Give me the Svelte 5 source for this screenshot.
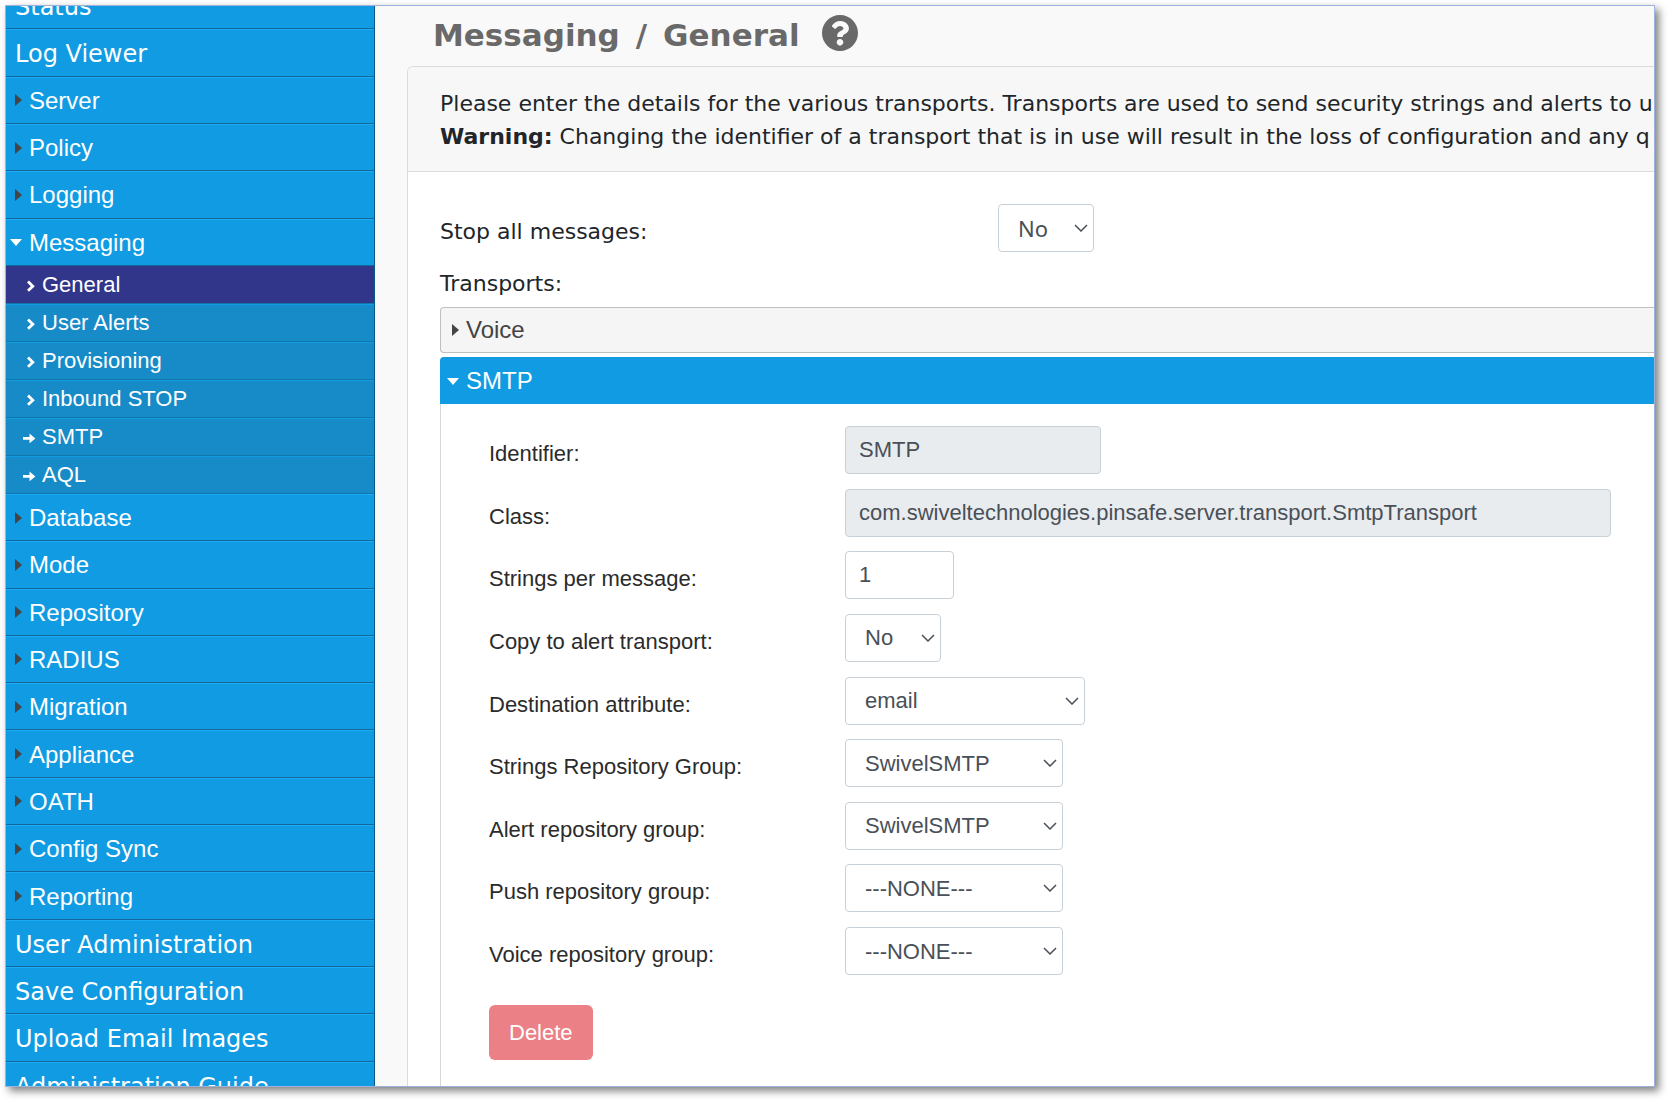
<script>
  const menu = [
    { label: 'Status' },
    { label: 'Log Viewer' },
    { label: 'Server', group: true },
    { label: 'Policy', group: true },
    { label: 'Logging', group: true },
    {
      label: 'Messaging',
      group: true,
      children: [
        { label: 'General', icon: 'angle' },
        { label: 'User Alerts', icon: 'angle' },
        { label: 'Provisioning', icon: 'angle' },
        { label: 'Inbound STOP', icon: 'angle' },
        { label: 'SMTP', icon: 'arrow' },
        { label: 'AQL', icon: 'arrow' },
      ],
    },
    { label: 'Database', group: true },
    { label: 'Mode', group: true },
    { label: 'Repository', group: true },
    { label: 'RADIUS', group: true },
    { label: 'Migration', group: true },
    { label: 'Appliance', group: true },
    { label: 'OATH', group: true },
    { label: 'Config Sync', group: true },
    { label: 'Reporting', group: true },
    { label: 'User Administration' },
    { label: 'Save Configuration' },
    { label: 'Upload Email Images' },
    { label: 'Administration Guide' },
  ];

  const fields = [
    { id: 'identifier', label: 'Identifier:', type: 'text', value: 'SMTP', size: 'name', disabled: true },
    {
      id: 'class',
      label: 'Class:',
      type: 'text',
      value: 'com.swiveltechnologies.pinsafe.server.transport.SmtpTransport',
      size: 'class',
      disabled: true,
    },
    { id: 'strings', label: 'Strings per message:', type: 'text', value: '1', size: 'count' },
    { id: 'copy', label: 'Copy to alert transport:', type: 'select', options: ['No', 'Yes'], size: 'yesno' },
    { id: 'destination', label: 'Destination attribute:', type: 'select', options: ['email'], size: 'attribute' },
    { id: 'strings-group', label: 'Strings Repository Group:', type: 'select', options: ['SwivelSMTP', '---NONE---'], size: 'group' },
    { id: 'alert-group', label: 'Alert repository group:', type: 'select', options: ['SwivelSMTP', '---NONE---'], size: 'group' },
    { id: 'push-group', label: 'Push repository group:', type: 'select', options: ['---NONE---', 'SwivelSMTP'], size: 'group' },
    { id: 'voice-group', label: 'Voice repository group:', type: 'select', options: ['---NONE---', 'SwivelSMTP'], size: 'group' },
  ];

  let current = $state('General');
  let smtpOpen = $state(true);
</script>

{#snippet caret(open)}
  <svg class="caret" viewBox="0 0 14 14" aria-hidden="true">
    {#if open}
      <path d="M1 4h12l-6 7z" fill="#fff" />
    {:else}
      <path d="M6 1v12l7-6z" fill="#444" />
    {/if}
  </svg>
{/snippet}

<div class="page">
  <div class="frame">
    <nav class="sidebar">
      <ul class="menu">
        {#each menu as item}
          <li>
            <a class="menu-link" class:group={item.group} href="#{item.label}">
              {#if item.group}
                {@render caret(!!item.children)}
              {/if}
              {item.label}
            </a>
            {#if item.children}
              <ul class="submenu">
                {#each item.children as child}
                  <li>
                    <a
                      class="submenu-link"
                      class:active={current === child.label}
                      href="#{child.label}"
                      onclick={() => (current = child.label)}
                    >
                      <svg class="sub-icon" viewBox="0 0 14 14" aria-hidden="true">
                        {#if child.icon === 'angle'}
                          <path d="M5 2.6l4.8 4.6L5 11.8" fill="none" stroke="#fff" stroke-width="2.8" />
                        {:else}
                          <path d="M0 6h6.5V2.6L12.4 7.4 6.5 12.2V8.8H0z" fill="#fff" />
                        {/if}
                      </svg>
                      {child.label}
                    </a>
                  </li>
                {/each}
              </ul>
            {/if}
          </li>
        {/each}
      </ul>
    </nav>

    <main>
      <h1>
        <span>Messaging</span>
        <span>/</span>
        <span>General</span>
        <a class="help" href="#help" aria-label="Help">
          <svg viewBox="8 8 496 496" aria-hidden="true">
            <path
              fill="currentColor"
              d="M504 256c0 136.997-111.043 248-248 248S8 392.997 8 256C8 119.083 119.043 8 256 8s248 111.083 248 248zM262.655 90c-54.497 0-89.255 22.957-116.549 63.758-3.536 5.286-2.353 12.415 2.715 16.258l34.699 26.31c5.205 3.947 12.621 3.008 16.665-2.122 17.864-22.658 30.113-35.797 57.303-35.797 20.429 0 45.698 13.148 45.698 32.958 0 14.976-12.363 22.667-32.534 33.976C247.128 238.528 216 254.941 216 296v4c0 6.627 5.373 12 12 12h56c6.627 0 12-5.373 12-12v-1.333c0-28.462 83.186-29.647 83.186-106.667 0-58.002-60.165-102-116.531-102zM256 338c-25.365 0-46 20.635-46 46 0 25.364 20.635 46 46 46s46-20.636 46-46c0-25.365-20.635-46-46-46z"
            />
          </svg>
        </a>
      </h1>

      <section class="card">
        <header class="intro">
          <p>Please enter the details for the various transports. Transports are used to send security strings and alerts to u</p>
          <p><strong>Warning:</strong> Changing the identifier of a transport that is in use will result in the loss of configuration and any q</p>
        </header>

        <div class="card-body">
          <div class="stop-row">
            <label for="stop-all">Stop all messages:</label>
            <select id="stop-all" class="yesno">
              <option>No</option>
              <option>Yes</option>
            </select>
          </div>

          <h2>Transports:</h2>

          <button type="button" class="accordion">
            {@render caret(false)}
            Voice
          </button>
          <button type="button" class="accordion" class:open={smtpOpen} onclick={() => (smtpOpen = !smtpOpen)}>
            {@render caret(smtpOpen)}
            SMTP
          </button>

          {#if smtpOpen}
            <form class="transport">
              <div class="fields">
                {#each fields as field}
                  <div class="field">
                    <label for={field.id}>{field.label}</label>
                    {#if field.type === 'select'}
                      <select id={field.id} class={field.size}>
                        {#each field.options as option}
                          <option>{option}</option>
                        {/each}
                      </select>
                    {:else}
                      <input type="text" id={field.id} class={field.size} value={field.value} disabled={field.disabled} />
                    {/if}
                  </div>
                {/each}
              </div>
              <button type="button" class="delete">Delete</button>
            </form>
          {/if}
        </div>
      </section>
    </main>
  </div>
</div>

<style>
  :global(body) {
    margin: 0;
    background: #fff;
  }

  .page,
  .page :global(*) {
    box-sizing: border-box;
  }

  .page {
    display: grid;
    grid-template-rows: minmax(0, 1fr);
    height: 100vh;
    padding: 5px 13px 13px 5px;
    overflow: hidden;
  }

  .frame {
    display: grid;
    grid-template-rows: minmax(0, 1fr);
    grid-template-columns: 369px minmax(0, 1fr);
    border: 1px solid #9db2dc;
    background: #f9f9f9;
    box-shadow: 4px 4px 8px rgba(0, 0, 0, 0.5);
    overflow: hidden;
    color: #212529;
    font-family: 'Liberation Sans', Arial, sans-serif;
    font-size: 22px;
    line-height: 33px;
  }

  /* sidebar */
  .sidebar {
    display: flex;
    flex-direction: column;
    min-height: 0;
    overflow: hidden;
    border-right: 1px solid #07598a;
    background: #109be2;
  }

  ul {
    margin: 0;
    padding: 0;
    list-style: none;
  }

  /* scrolled a little, so the first and last entries are cut */
  .menu {
    display: flex;
    flex: 1;
    flex-direction: column;
    margin: -24px 0 -23px;
  }

  .menu > li {
    display: flex;
    flex: 1 0 auto;
    flex-direction: column;
  }

  .menu-link {
    display: flex;
    flex: 1 0 auto;
    align-items: center;
    min-height: 47px;
    padding: 4px 9px 0;
    border-top: 1px solid #1cabf6;
    border-bottom: 1px solid #136899;
    color: #fff;
    font-family: 'DejaVu Sans', Verdana, sans-serif;
    font-size: 24px;
    text-decoration: none;
  }

  .menu-link.group {
    padding: 0 3px;
    font-family: 'Liberation Sans', Arial, sans-serif;
  }

  .caret {
    flex: none;
    width: 14px;
    height: 14px;
    margin-right: 6px;
  }

  .submenu-link {
    display: flex;
    align-items: center;
    height: 38px;
    padding: 0 17px;
    border-top: 1px solid #109be2;
    border-bottom: 1px solid #1176ac;
    background: #178bc7;
    color: #fff;
    text-decoration: none;
  }

  .submenu-link.active {
    border-top-color: #32368a;
    background: #32368a;
  }

  .sub-icon {
    flex: none;
    width: 14px;
    height: 14px;
    margin: 2px 5px 0 0;
  }

  /* content */
  main {
    min-width: 0;
    padding-left: 32px;
    overflow: hidden;
    font-family: 'DejaVu Sans', Verdana, sans-serif;
  }

  h1 {
    display: flex;
    align-items: center;
    gap: 16px;
    height: 60px;
    margin: 0;
    padding: 0 0 2px 26px;
    color: #696969;
    font-size: 31px;
    white-space: nowrap;
  }

  .help {
    display: flex;
    margin: 0 0 4px 6px;
    color: inherit;
  }

  .help svg {
    width: 36px;
    height: 36px;
  }

  .card {
    min-height: 100%;
    border: 1px solid #dcdcdc;
    border-right: 0;
    border-radius: 6px 0 0 0;
    background: #fff;
    overflow: hidden;
  }

  .intro {
    padding: 20px 0 18px 32px;
    border-bottom: 1px solid #dcdcdc;
    background: #f7f7f7;
    white-space: nowrap;
  }

  p {
    margin: 0;
  }

  .card-body {
    padding: 32px 0 0 32px;
  }

  .stop-row {
    display: grid;
    grid-template-columns: 558px auto;
    justify-items: start;
  }

  label {
    padding-top: 11px;
  }

  h2 {
    margin: 15px 0 7px;
    font-size: 22px;
    font-weight: normal;
  }

  .accordion {
    display: flex;
    align-items: center;
    width: 100%;
    height: 46px;
    margin-bottom: 4px;
    padding: 0 5px;
    border: 1px solid #bfbfbf;
    border-right: 0;
    border-radius: 4px 0 0 4px;
    background: #f5f5f5;
    color: #444;
    font-family: 'Liberation Sans', Arial, sans-serif;
    font-size: 24px;
  }

  .accordion.open {
    height: 47px;
    margin-bottom: 0;
    border-color: #109be2;
    border-radius: 4px 0 0 0;
    background: #109be2;
    color: #fff;
  }

  .transport {
    padding: 22px 0 40px 48px;
    border-left: 1px solid #d8d8d8;
    color: #2b2b2b;
    font-family: 'Liberation Sans', Arial, sans-serif;
  }

  .fields {
    display: flex;
    flex-direction: column;
    justify-content: space-between;
    min-height: 549px;
  }

  .field {
    display: grid;
    grid-template-columns: 356px auto;
    justify-items: start;
    height: 48px;
  }

  input,
  select {
    height: 48px;
    border: 1px solid #c8d0d7;
    border-radius: 4px;
    background: #fff;
    color: #495057;
    font-family: 'Liberation Sans', Arial, sans-serif;
    font-size: 22px;
  }

  input {
    padding: 0 13px;
  }

  input:disabled {
    background: #e9ecef;
  }

  select {
    padding: 0 32px 0 19px;
    appearance: none;
    background: #fff
      url("data:image/svg+xml,%3Csvg xmlns='http://www.w3.org/2000/svg' viewBox='0 0 14 8'%3E%3Cpath d='M1 1l6 6 6-6' fill='none' stroke='%23495057' stroke-width='1.5'/%3E%3C/svg%3E")
      no-repeat right 5px center / 14px 8px;
  }

  .stop-row select {
    font-family: 'Noto Sans', 'Open Sans', sans-serif;
  }

  .name {
    width: 256px;
  }

  .class {
    width: 766px;
  }

  .count {
    width: 109px;
  }

  .yesno {
    width: 96px;
  }

  .attribute {
    width: 240px;
  }

  .group:is(select) {
    width: 218px;
  }

  .delete {
    height: 55px;
    margin-top: 30px;
    padding: 0 20px;
    border: 0;
    border-radius: 6px;
    background: #eb8086;
    color: #fff;
    font-family: 'Liberation Sans', Arial, sans-serif;
    font-size: 22px;
  }
</style>
